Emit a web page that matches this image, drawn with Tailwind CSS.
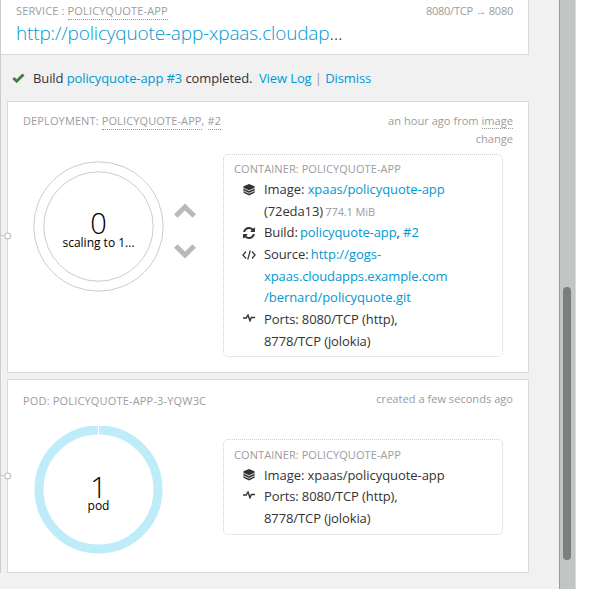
<!DOCTYPE html>
<html lang="en">
<head>
<meta charset="utf-8">
<title>Overview</title>
<script src="https://cdn.jsdelivr.net/npm/@tailwindcss/browser@4"></script>
</head>
<body class="flex h-[589px] w-[592px] overflow-hidden bg-white font-['Open_Sans',sans-serif] text-[13px] leading-[21.667px] text-[#333]">
<svg class="hidden">
  <symbol id="layers" viewBox="0 0 12 12"><path d="M6 0 11.500 2.200V8.700L6 11.400.5 8.700V2.200Z" fill="#333"/><path d="M.8 4.400 6 6.700 11.200 4.400M.8 7 6 9.300 11.200 7" fill="none" stroke="#fff" stroke-width=".8"/></symbol>
  <symbol id="refresh" viewBox="0 0 1536 1536"><path fill="#333" d="M1511 928q0 5-1 7-64 268-268 434.500T764 1536q-146 0-282.500-55T238 1324l-129 129q-19 19-45 19t-45-19-19-45V960q0-26 19-45t45-19h448q26 0 45 19t19 45-19 45l-137 137q71 66 161 102t187 36q134 0 250-65t186-179q11-17 53-117 8-23 30-23h192q13 0 22.500 9.500t9.500 22.500zm25-800v448q0 26-19 45t-45 19h-448q-26 0-45-19t-19-45 19-45l138-138Q969 256 768 256q-134 0-250 65T332 500q-11 17-53 117-8 23-30 23H50q-13 0-22.500-9.500T18 608v-7q65-268 270-434.500T768 0q146 0 284 55.500T1297 212l130-129q19-19 45-19t45 19 19 45z"/></symbol>
  <symbol id="code" viewBox="0 0 14 10"><path d="M4 1.500 .9 5 4 8.500M10 1.500 13.100 5 10 8.500M8.300.5 5.700 9.500" fill="none" stroke="#333" stroke-width="1.200"/></symbol>
  <symbol id="pulse" viewBox="0 0 12 8"><path d="M0 4H3.300L5 1 7 6.800 8.400 3.500H12" fill="none" stroke="#333" stroke-width="1.400"/></symbol>
</svg>
<main class="relative h-full w-[559px] shrink-0 bg-[#f1f1f1]">
  <div class="h-[573px] border-l border-[#ccc]">
    <section class="h-[55px] w-[528px] border-r border-b border-[#d9d9d9] bg-white pr-[15px] pl-[15px]">
      <div class="flex h-[22px] justify-between text-[11px] leading-[22px] text-[#9c9c9c]">
        <span class="tracking-[0.14px]">SERVICE : <span class="border-b border-dotted border-[#999] pb-px">POLICYQUOTE-APP</span></span>
        <span class="tracking-[-0.24px]">8080/TCP → 8080</span>
      </div>
      <h1 class="text-[19px] leading-[22px] font-light tracking-[-0.17px]"><a class="text-[#0099d3]">http://policyquote-app-xpaas.cloudap</a>...</h1>
    </section>
    <div class="flex h-[46px] items-center pl-[11px] whitespace-pre">
      <svg class="mr-2 h-[10px] w-[13px]" viewBox="0 0 13 10"><path d="M1.300 5 4.700 8.200 11.500 1.400" fill="none" stroke="#3f7a3f" stroke-width="2.800"/></svg>
      <p class="pt-[2px] tracking-[-0.1px]">Build <a class="text-[#0099d3]">policyquote-app #3</a> completed.  <a class="text-[#0099d3]">View Log</a> <span class="text-[#999]">|</span> <a class="text-[#0099d3]">Dismiss</a></p>
    </div>
    <section class="ml-[6px] flex h-[272px] w-[522px] flex-col border border-[#d9d9d9] bg-white px-[15px] pt-[10px]">
      <div class="flex h-[42px] justify-between text-[11px] leading-[18px] text-[#9c9c9c]">
        <span class="tracking-[0.12px]">DEPLOYMENT: <span class="border-b border-dotted border-[#999] pb-px">POLICYQUOTE-APP</span>, <span class="border-b border-dotted border-[#999] pb-px">#2</span></span>
        <span class="text-right text-[11.100px]">an hour ago from <span class="border-b border-dotted border-[#999]">image</span><br>change</span>
      </div>
      <div class="flex">
        <svg class="mt-[7px] ml-[10px] h-[132px] w-[132px]" viewBox="0 0 132 132" text-anchor="middle">
          <circle cx="65.500" cy="65.500" r="64.700" fill="none" stroke="#ccc"/><circle cx="65.500" cy="65.500" r="54.700" fill="none" stroke="#ccc"/>
          <text x="65.500" y="73" font-size="29" font-weight="300">0</text><text x="65.500" y="86" font-size="12">scaling to 1...</text>
        </svg>
        <svg class="mt-[49px] ml-[9px] h-[56px] w-[22px]" viewBox="0 0 22 56"><path d="M1.800 13 11 4 20.200 13M1.800 43 11 52 20.200 43" fill="none" stroke="#b9b9b9" stroke-width="5"/></svg>
        <div class="ml-[27px] h-[203px] w-[280px] rounded-[5px] border border-dotted border-[#d1d1d1] px-[10px] pt-[4px] tracking-[-0.1px]">
          <div class="h-[20px] text-[11px] leading-[19px] tracking-[0.08px] text-[#9c9c9c]">CONTAINER: POLICYQUOTE-APP</div>
          <div class="flex"><div class="w-[30px] shrink-0 pt-[5px] pl-[9px]"><svg class="h-3 w-3"><use href="#layers"/></svg></div><p><span class="tracking-[-0.06px]">Image: <a class="text-[#0099d3]">xpaas/policyquote-app</a></span><br>(72eda13) <span class="-ml-px text-[11px] text-[#9c9c9c]">774.1 MiB</span></p></div>
          <div class="flex"><div class="w-[30px] shrink-0 pt-[5px] pl-[9px]"><svg class="h-3 w-3"><use href="#refresh"/></svg></div><p>Build: <a class="-ml-px text-[#0099d3]">policyquote-app</a>, <a class="text-[#0099d3]">#2</a></p></div>
          <div class="flex"><div class="w-[30px] shrink-0 pt-[6px] pl-[8px]"><svg class="h-[10px] w-[14px]"><use href="#code"/></svg></div><p>Source: <a class="-ml-px text-[#0099d3]"><span class="tracking-normal">http://gogs-</span><br>xpaas.cloudapps.example.com<br><span class="tracking-[-0.04px]">/bernard/policyquote.git</span></a></p></div>
          <div class="flex"><div class="w-[30px] shrink-0 pt-[5px] pl-[9px]"><svg class="h-2 w-3"><use href="#pulse"/></svg></div><p>Ports: 8080/TCP (http),<br>8778/TCP (jolokia)</p></div>
        </div>
      </div>
    </section>
    <section class="mt-[6px] ml-[6px] flex h-[194px] w-[522px] flex-col border border-[#d9d9d9] bg-white px-[15px] pt-[10px]">
      <div class="flex h-[36px] justify-between text-[11px] leading-[18px] text-[#9c9c9c]">
        <span class="pt-[2px] tracking-[0.17px]">POD: POLICYQUOTE-APP-3-YQW3C</span>
        <span class="text-[11.100px]">created a few seconds ago</span>
      </div>
      <div class="flex">
        <svg class="ml-[10px] h-[131px] w-[131px]" viewBox="0 0 131 131" text-anchor="middle">
          <circle cx="65.500" cy="63.500" r="59.500" fill="none" stroke="#beecf9" stroke-width="9"/><path d="M65.500-1V9" stroke="#fff"/>
          <text x="65.500" y="72" font-size="29" font-weight="300">1</text><text x="65.500" y="84" font-size="12">pod</text>
        </svg>
        <div class="mt-[13px] ml-[59px] h-[96px] w-[280px] rounded-[5px] border border-dotted border-[#d1d1d1] px-[10px] pt-[5px] tracking-[-0.1px]">
          <div class="h-[19.500px] text-[11px] leading-[19px] tracking-[0.08px] text-[#9c9c9c]">CONTAINER: POLICYQUOTE-APP</div>
          <div class="flex"><div class="w-[30px] shrink-0 pt-[4px] pl-[9px]"><svg class="h-3 w-3"><use href="#layers"/></svg></div><p class="tracking-[-0.06px]">Image: xpaas/policyquote-app</p></div>
          <div class="flex"><div class="w-[30px] shrink-0 pt-[5px] pl-[9px]"><svg class="h-2 w-3"><use href="#pulse"/></svg></div><p>Ports: 8080/TCP (http),<br>8778/TCP (jolokia)</p></div>
        </div>
      </div>
    </section>
  </div>
  <svg class="absolute top-[231px] left-px h-[10px] w-[11px]"><path d="M0 4.500H4" stroke="#ccc"/><circle cx="6.800" cy="5" r="2.900" fill="#fff" stroke="#c6c6c6" stroke-width="1.200"/></svg>
  <svg class="absolute top-[471px] left-px h-[10px] w-[11px]"><path d="M0 4.500H4" stroke="#ccc"/><circle cx="6.800" cy="5" r="2.900" fill="#fff" stroke="#c6c6c6" stroke-width="1.200"/></svg>
</main>
<aside class="h-full w-[17px] shrink-0 border-r border-l border-r-[#d9dbdb] border-l-[#999] bg-[#c3c5c4] pt-[287px] pl-[3px]">
  <div class="h-[273px] w-2 rounded-full bg-[#7b7e7e]"></div>
</aside>
</body>
</html>
